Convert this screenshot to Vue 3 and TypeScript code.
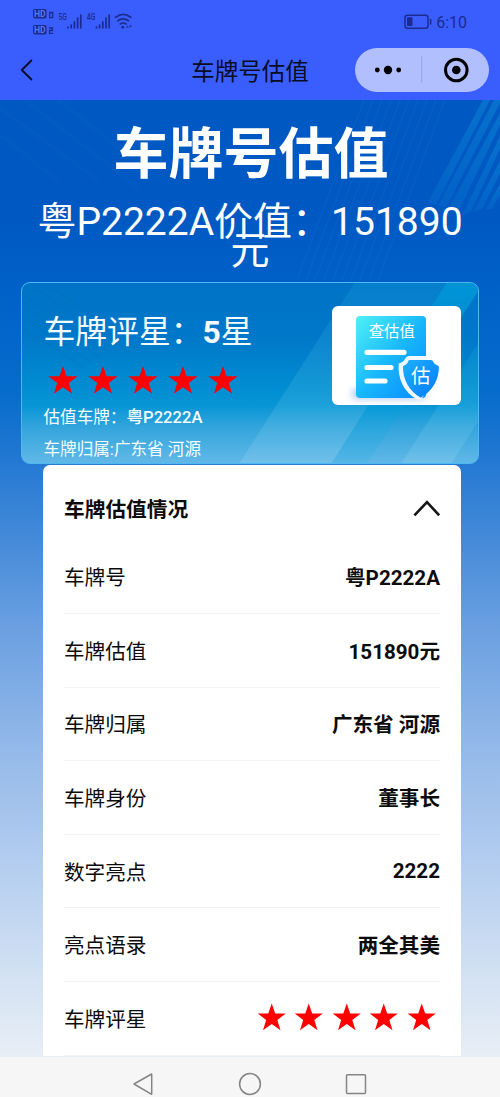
<script setup lang="ts">
interface DetailRow {
  label: string
  value?: string
  stars?: number
}

const plate = '粤P2222A'
const region = '广东省 河源'
const starPoints = '0,-15 3.6,-4.7 14.6,-4.7 5.8,2 9.1,12.8 0,6.3 -9.1,12.8 -5.8,2 -14.6,-4.7 -3.6,-4.7'

const rows: DetailRow[] = [
  { label: '车牌号', value: plate },
  { label: '车牌估值', value: '151890元' },
  { label: '车牌归属', value: region },
  { label: '车牌身份', value: '董事长' },
  { label: '数字亮点', value: '2222' },
  { label: '亮点语录', value: '两全其美' },
  { label: '车牌评星', stars: 5 },
]
</script>

<template>
  <div class="phone">
    <header class="top">
      <div class="status">
        <svg class="signals" width="102" height="32" viewBox="0 0 102 32">
          <g fill="#1b2c8e">
            <rect x="0" y="1" width="13.5" height="9.5" rx="2" />
            <rect x="0" y="17" width="13.5" height="9.5" rx="2" />
          </g>
          <g>
            <text x="1" y="8.900" class="hd">HD</text>
            <text x="1" y="24.900" class="hd">HD</text>
            <text x="25.500" y="12.400" class="net" textLength="8.500" lengthAdjust="spacingAndGlyphs">5G</text>
            <text x="53.800" y="12.400" class="net" textLength="8.500" lengthAdjust="spacingAndGlyphs">4G</text>
          </g>
          <g fill="none" stroke="#1b2c8e" stroke-width="1.3">
            <path d="M16.7 4.5h3v5.2h-3zM16 20h3.5v2.5h-3v2.8h3.7" />
          </g>
          <g stroke="#1b2c8e" stroke-width="1.7" stroke-linecap="round">
            <path d="M35 19.2v.6M38.2 17v2.8M41.4 13.8v6M44.6 10v9.8M47.8 7v12.8" />
            <path d="M63.4 19.2v.6M66.6 17v2.8M69.8 13.8v6M73 10v9.8M76.2 7v12.8" />
          </g>
          <g fill="none" stroke="#1b2c8e" stroke-width="1.7" stroke-linecap="round">
            <path d="M82.5 9.4q8-6 15.4 0M84.9 12.8q5.3-4 10.6 0M87.3 16q2.9-2 5.8 0" />
          </g>
          <circle cx="89.8" cy="19.2" r="1.4" fill="#1b2c8e" />
          <path d="M93 19.6l1.5-2.2 1.5 2.2zM96 17.6h3l-1.5 2.2z" fill="#1b2c8e" />
        </svg>
        <div class="power">
          <svg width="28" height="16" viewBox="0 0 28 16">
            <rect x="1" y="1.2" width="23" height="13" rx="2.5" fill="none" stroke="#1b2c8e" stroke-width="1.5" />
            <rect x="3" y="3.3" width="5.5" height="8.8" rx="1" fill="#1b2c8e" />
            <path d="M26.6 5v5.6" stroke="#1b2c8e" stroke-width="1.6" />
          </svg>
          <span class="clock">6:10</span>
        </div>
      </div>
      <div class="navbar">
        <svg class="back" width="14" height="24" viewBox="0 0 14 24">
          <path d="M11.4 2.5L1.8 12l9.6 9.5" fill="none" stroke="#080c25" stroke-width="1.8" stroke-linecap="round" stroke-linejoin="round" />
        </svg>
        <h1>车牌号估值</h1>
        <div class="capsule">
          <svg width="134" height="44" viewBox="0 0 134 44">
            <circle cx="22.3" cy="22" r="2.4" />
            <circle cx="33" cy="22" r="4.2" />
            <circle cx="43.7" cy="22" r="2.4" />
            <path d="M66.7 8v27" stroke="#93a4e8" stroke-width="1" />
            <circle cx="101.3" cy="22" r="10.8" fill="none" stroke="#000" stroke-width="3" />
            <circle cx="101.3" cy="22" r="4.3" />
          </svg>
        </div>
      </div>
    </header>

    <main class="page">
      <svg class="rays" width="500" height="365" viewBox="0 0 500 365">
        <defs>
          <linearGradient id="ray" x1="0" y1="0" x2="0" y2="1">
            <stop offset="0" stop-color="#0c86d6" stop-opacity=".55" />
            <stop offset="1" stop-color="#0878d2" stop-opacity=".32" />
          </linearGradient>
        </defs>
        <g fill="url(#ray)">
          <path d="M483 0h7L436 105l-8-3z" />
          <path d="M494 0h6v3L446 107l-8-1z" />
          <path d="M500 13v12L460 108h-11z" />
          <path d="M500 36v13L471 111l-9 5z" />
          <path d="M500 61v12L482 109l-8 2z" />
          <path d="M500 84v11l-8 14h-6z" />
        </g>
        <g stroke="#2580dc" stroke-width="1.2" opacity=".16">
          <path d="M364 0L297 180M373 0L306 180M382 0L315 180M391 0L324 180M400 0L333 180M409 0L342 180M418 0L351 180M427 0L360 180M436 0L369 180M445 0L378 180" />
        </g>
        <g stroke="#1580d5" stroke-width="4" opacity=".06">
          <path d="M0 8L100 82M25 0L140 90M58 0L160 80M0 35L60 82" />
        </g>
      </svg>

      <h2 class="headline">车牌号估值</h2>
      <p class="worth">粤P2222A价值：151890<br>元</p>

      <section class="card">
        <svg class="beams" width="458" height="182" viewBox="0 0 458 182">
          <defs>
            <linearGradient id="beam" x1="0" y1="0" x2="0" y2="1">
              <stop offset="0" stop-color="#20b8e8" stop-opacity=".16" />
              <stop offset="1" stop-color="#b4e4f6" stop-opacity=".18" />
            </linearGradient>
            <linearGradient id="beam-cyan" x1="0" y1="0" x2="0" y2="1">
              <stop offset="0" stop-color="#00b5e4" stop-opacity=".5" />
              <stop offset="1" stop-color="#00a5e0" stop-opacity=".12" />
            </linearGradient>
          </defs>
          <path d="M334 0h92L310 182H218z" fill="url(#beam)" />
          <path d="M426 0h32v8L346 182h-36z" fill="url(#beam-cyan)" />
          <path d="M458 60v78l-28 44h-50z" fill="url(#beam)" />
          <g stroke="#006dbd" stroke-width="2" opacity=".15">
            <path d="M0 12L90 72M0 23L80 76M0 34L70 80M0 45L65 87M12 5L112 72M28 4L128 70" />
          </g>
        </svg>
        <div class="summary">
          <p class="rating">车牌评星：<b>5</b>星</p>
          <div class="stars">
            <svg v-for="n in 5" :key="n" width="40" height="32" viewBox="-20 -16 40 32">
              <polygon :points="starPoints" fill="#fe0000" />
            </svg>
          </div>
          <p class="note">估值车牌：<b>{{ plate }}</b></p>
          <p class="note">车牌归属:{{ region }}</p>
        </div>
        <div class="thumb">
          <svg width="129" height="99" viewBox="0 0 129 99">
            <defs>
              <linearGradient id="sheet" x1="0" y1="0" x2="1" y2="1">
                <stop offset="0" stop-color="#50f1f5" />
                <stop offset=".5" stop-color="#18b8fb" />
                <stop offset="1" stop-color="#0888ff" />
              </linearGradient>
              <linearGradient id="shield" x1="0" y1="0" x2="1" y2="1">
                <stop offset="0" stop-color="#1cb1fb" />
                <stop offset="1" stop-color="#0779fa" />
              </linearGradient>
              <filter id="soft" x="-20%" y="-80%" width="140%" height="260%">
                <feGaussianBlur stdDeviation="3.5" />
              </filter>
            </defs>
            <rect x="20" y="83" width="74" height="10" rx="3" fill="#7ea6f0" opacity=".6" filter="url(#soft)" />
            <rect x="24" y="10" width="70" height="82" rx="4" fill="url(#sheet)" />
            <g stroke="#fff" stroke-width="5.2" stroke-linecap="round">
              <path d="M35 46.300h37M35 61.500h24M35 75h18" />
            </g>
            <path d="M95 50H77.500q-3 0-4.500 3-1.500 3-6.300 4.500C65.500 73 72 86 85 93.500h4l6-8z" fill="#f1f8ff" />
            <path d="M77.500 54H99q1.500 0 2.300 1.800 1.200 3 5.500 4.200C107.500 73 100.500 85 88.700 91.800 77 85 70.500 73 71 60q4-1.200 5-4.200.500-1.800 1.500-1.800z" fill="url(#shield)" />
            <text x="59.800" y="31.200" class="sheet-text">查估值</text>
            <text x="88.700" y="76.500" class="shield-text">估</text>
          </svg>
        </div>
      </section>

      <section class="details">
        <div class="details-head">
          <h3>车牌估值情况</h3>
          <svg width="28" height="18" viewBox="0 0 28 18">
            <path d="M2.400 16.300L15 3.200 27.200 16.300" fill="none" stroke="#161616" stroke-width="2.600" />
          </svg>
        </div>
        <div v-for="row in rows" :key="row.label" class="row">
          <span>{{ row.label }}</span>
          <b v-if="row.value">{{ row.value }}</b>
          <div v-else class="row-stars">
            <svg v-for="n in row.stars" :key="n" width="37.500" height="30" viewBox="-19.500 -15.500 39 31">
              <polygon :points="starPoints" fill="#fe0000" />
            </svg>
          </div>
        </div>
      </section>
    </main>

    <nav class="system">
      <svg width="500" height="40" viewBox="0 0 500 40">
        <g fill="none" stroke="#858585" stroke-width="1.500" stroke-linejoin="round">
          <path d="M151.700 17v20.300L134 27z" />
          <circle cx="250" cy="27" r="10.400" />
          <rect x="346.500" y="17.700" width="19" height="18.800" rx="1" />
        </g>
      </svg>
    </nav>
  </div>
</template>

<style>
body {
  margin: 0;
}
</style>

<style scoped>
.phone {
  width: 500px;
  height: 1097px;
  display: flex;
  flex-direction: column;
  overflow: hidden;
  font-family: Roboto, "Noto Sans CJK SC", sans-serif;
  color: #0c0c0c;
}

h1, h2, h3, p {
  margin: 0;
  font-weight: 400;
}

.top {
  flex: none;
  height: 100px;
  background: #3a5efd;
  color: #080c25;
}

.status {
  height: 42px;
  display: flex;
  justify-content: space-between;
  padding: 0 33px;
}

.signals {
  margin-top: 8px;
}

.hd {
  font-size: 8.500px;
  font-weight: 700;
  fill: #5b76ee;
}

.net {
  font-size: 8.500px;
  font-weight: 500;
  fill: #1b2c8e;
}

.power {
  display: flex;
  height: 16px;
  margin-top: 14px;
}

.clock {
  margin-left: 4px;
  font-size: 16px;
  line-height: 17px;
  color: #1b2c8e;
}

.navbar {
  display: grid;
  grid-template-columns: 1fr 118px 1fr;
  align-items: center;
  height: 56px;
  padding: 0 11.500px 0 20px;
}

.navbar h1 {
  margin: 3px 0 0 -4px;
  font-size: 23.500px;
  line-height: 34px;
  white-space: nowrap;
}

.navbar > :first-child {
  justify-self: start;
}

.capsule {
  justify-self: end;
  width: 133.500px;
  height: 44px;
  border-radius: 22px;
  background: #b1bffe;
}

.capsule svg {
  display: block;
}

.page {
  position: relative;
  flex: none;
  height: 957px;
  overflow: hidden;
  background: linear-gradient(180deg, #0059c2 0, #0058c2 110px, #0061c8 190px, #066ccc 290px, #1e76d1 350px, #4188d8 430px, #6ba0e1 530px, #94b9e9 650px, #b8d0f0 780px, #d4e2f3 880px, #e8eef6 957px);
}

.rays {
  position: absolute;
  top: 0;
  left: 0;
}

.headline {
  position: relative;
  padding-top: 23px;
  height: 62px;
  font-size: 55px;
  line-height: 62px;
  font-weight: 700;
  text-align: center;
  color: #fff;
  padding-left: 2px;
}

.worth {
  position: relative;
  margin-top: 23px;
  font-size: 39px;
  line-height: 29px;
  text-align: center;
  color: #fff;
}

.card {
  position: relative;
  box-sizing: border-box;
  display: flex;
  justify-content: space-between;
  width: 458px;
  height: 182px;
  margin: 16px 0 0 21px;
  padding: 0 17px 0 21.500px;
  border: 1.500px solid #4db9f0;
  border-radius: 9px;
  overflow: hidden;
  color: #f4fdff;
  background: linear-gradient(180deg, #0073c6 0, #0078c9 55px, #008bd0 100px, #0795d5 122px, #34a5dc 145px, #64b9e8 182px);
}

.beams {
  position: absolute;
  top: -1px;
  left: -1px;
}

.summary {
  position: relative;
}

.rating {
  margin-top: 28px;
  font-size: 31.800px;
  line-height: 42px;
  white-space: nowrap;
}

.stars {
  display: flex;
  height: 32px;
  margin: 12px 0 0 -1px;
}

.note {
  font-size: 16.600px;
  line-height: 32px;
  white-space: nowrap;
}

.note b {
  font-weight: 500;
}

.stars + .note {
  margin-top: 4.500px;
}

.thumb {
  position: relative;
  width: 129px;
  height: 99px;
  margin-top: 23px;
  border-radius: 6px;
  background: #fff;
  overflow: hidden;
}

.sheet-text,
.shield-text {
  fill: #fff;
  text-anchor: middle;
  font-family: "Noto Sans CJK SC", sans-serif;
  font-size: 15.400px;
  font-weight: 400;
}

.shield-text {
  font-size: 19.500px;
}

.details {
  position: relative;
  width: 376px;
  margin: 1px 0 0 43px;
  padding: 0 21px;
  border-radius: 7px 7px 0 0;
  background: #fff;
}

.details-head {
  display: flex;
  align-items: center;
  justify-content: space-between;
  height: 65.500px;
  padding-top: 10px;
}

.details h3 {
  font-size: 20.700px;
  font-weight: 700;
}

.row {
  display: flex;
  align-items: center;
  justify-content: space-between;
  box-sizing: border-box;
  height: 73.600px;
  padding-bottom: 1px;
  border-bottom: 1.500px solid #f3f3f3;
  font-size: 20.600px;
}

.row b {
  font-weight: 700;
}

.row-stars {
  display: flex;
}

.system {
  flex: none;
  height: 40px;
  background: #f6f6f6;
}
</style>
